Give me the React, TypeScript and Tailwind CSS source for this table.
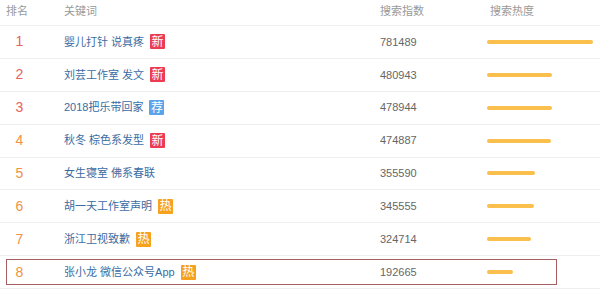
import React from 'react';

type Tag = 'new' | 'rec' | 'hot' | null;

type Row = {
  rank: number;
  keyword: string;
  tag: Tag;
  index: string;
  heat: number;
};

const rows: Row[] = [
  { rank: 1, keyword: '婴儿打针 说真疼', tag: 'new', index: '781489', heat: 106 },
  { rank: 2, keyword: '刘芸工作室 发文', tag: 'new', index: '480943', heat: 65 },
  { rank: 3, keyword: '2018把乐带回家', tag: 'rec', index: '478944', heat: 65 },
  { rank: 4, keyword: '秋冬 棕色系发型', tag: 'new', index: '474887', heat: 64 },
  { rank: 5, keyword: '女生寝室 佛系春联', tag: null, index: '355590', heat: 48 },
  { rank: 6, keyword: '胡一天工作室声明', tag: 'hot', index: '345555', heat: 47 },
  { rank: 7, keyword: '浙江卫视致歉', tag: 'hot', index: '324714', heat: 44 },
  { rank: 8, keyword: '张小龙 微信公众号App', tag: 'hot', index: '192665', heat: 26 },
];

const Badge = ({ tag }: { tag: Tag }) => {
  if (!tag) return null;
  const text = tag === 'new' ? '新' : tag === 'rec' ? '荐' : '热';
  const color = tag === 'new' ? 'bg-[#ec3c52]' : tag === 'rec' ? 'bg-[#5ba4ea]' : 'bg-[#f6a21e]';
  return (
    <span
      className={`ml-[6px] inline-flex h-[15px] w-[15px] items-center justify-center rounded-[1px] text-[12px] leading-none text-white ${color}`}
    >
      {text}
    </span>
  );
};

const Cells = ({ row, shift }: { row: Row; shift: number }) => (
  <>
    <div style={{ width: 64 - shift }} className="flex shrink-0">
      <span
        style={{ marginLeft: 6 - shift }}
        className={`w-[27px] text-center text-[14px] ${row.rank <= 3 ? 'text-[#e8625f]' : 'text-[#f09245]'}`}
      >
        {row.rank}
      </span>
    </div>
    <div className="flex w-[316px] shrink-0 items-center">
      <span className="text-[11px] text-[#3a6ca3]">{row.keyword}</span>
      <Badge tag={row.tag} />
    </div>
    <div className="w-[107px] shrink-0 text-[11px] text-[#666]">{row.index}</div>
    <div className="flex-1">
      <div style={{ width: row.heat }} className="h-[4px] rounded-full bg-[#fbbf4e]" />
    </div>
  </>
);

const App: React.FC = () => {
  return (
    <div
      className="h-[289px] w-[600px] overflow-hidden bg-white"
      style={{ fontFamily: '"Liberation Sans", "Noto Sans CJK SC", sans-serif' }}
    >
      <div className="flex h-[26px] items-center border-b border-[#eeeeee] pb-[2px] text-[11px] text-[#999]">
        <div className="w-[64px] shrink-0 pl-[6px]">排名</div>
        <div className="w-[316px] shrink-0">关键词</div>
        <div className="w-[107px] shrink-0">搜索指数</div>
        <div className="flex-1 pl-[3px]">搜索热度</div>
      </div>
      {rows.map((row) =>
        row.rank === 8 ? (
          <div key={row.rank} className="flex h-[32.875px] items-center border-b border-[#eeeeee]">
            <div className="ml-[6px] flex h-[26px] w-[551px] items-center border border-[#a5605f]">
              <Cells row={row} shift={7} />
            </div>
          </div>
        ) : (
          <div key={row.rank} className="flex h-[32.875px] items-center border-b border-[#eeeeee]">
            <Cells row={row} shift={0} />
          </div>
        )
      )}
    </div>
  );
};

export default App;
